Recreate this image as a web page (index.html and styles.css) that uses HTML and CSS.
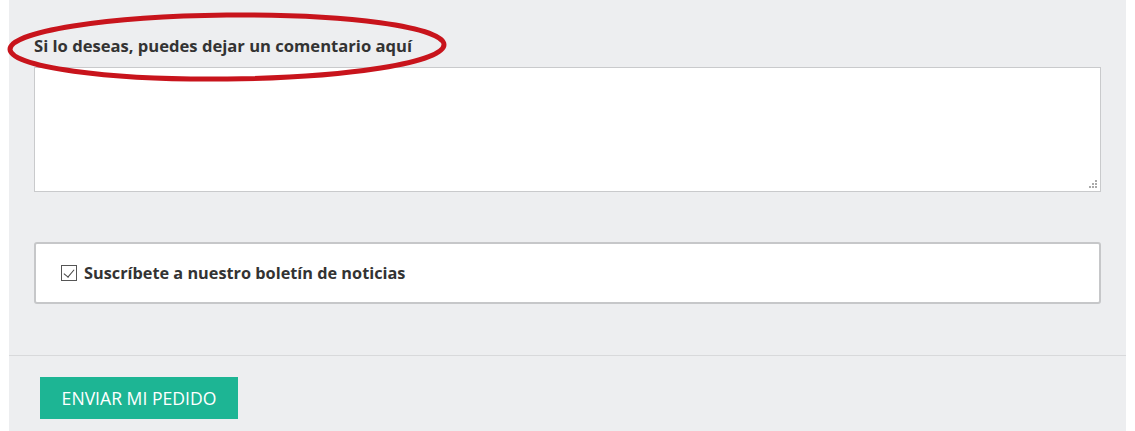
FILE: index.html
```html
<!DOCTYPE html>
<html>
<head>
  <title>Comentario del pedido</title>
  <link rel="stylesheet" href="styles.css">
</head>
<body>

  <div class="panel">
    <div class="fields">
      <div class="comment">
        <label class="comment-label" for="comment">Si lo deseas, puedes dejar un comentario aquí</label>
        <svg class="highlight" width="446" height="74" viewBox="0 0 446 74">
          <ellipse cx="222" cy="35" rx="217" ry="32" transform="rotate(-0.6 222 35)" fill="none" stroke="#c8141c" stroke-width="5"/>
        </svg>
        <div class="box-wrap">
          <textarea id="comment" class="comment-box"></textarea>
          <svg class="grip" width="10" height="10" viewBox="0 0 10 10">
            <rect x="7" y="1" width="2" height="2" fill="#aaa"/>
            <rect x="4" y="4" width="2" height="2" fill="#aaa"/>
            <rect x="7" y="4" width="2" height="2" fill="#aaa"/>
            <rect x="1" y="7" width="2" height="2" fill="#aaa"/>
            <rect x="4" y="7" width="2" height="2" fill="#aaa"/>
            <rect x="7" y="7" width="2" height="2" fill="#aaa"/>
          </svg>
        </div>
      </div>

      <div class="newsletter">
        <label class="check">
          <input type="checkbox" checked>
          <span>Suscríbete a nuestro boletín de noticias</span>
        </label>
      </div>
    </div>

    <div class="actions">
      <button class="send">ENVIAR MI PEDIDO</button>
    </div>
  </div>

</body>
</html>
```

FILE: styles.css
```css
body {
  margin: 0;
  padding: 0 9px;
  background: #fff;
  font-family: "Open Sans", "Liberation Sans", sans-serif;
  color: #333;
}
.panel {
  background: #edeef0;
  height: 431px;
}
.fields {
  padding: 34px 25px 51px 25px;
  border-bottom: 1px solid #d8d9db;
}
.comment {
  position: relative;
}
.comment-label {
  display: block;
  font-size: 16.6px;
  font-weight: bold;
  line-height: 24px;
  margin-bottom: 9px;
}
.highlight {
  position: absolute;
  left: -29px;
  top: -22px;
  z-index: 2;
  pointer-events: none;
}
.box-wrap {
  position: relative;
  margin-bottom: 50px;
}
.comment-box {
  display: block;
  box-sizing: border-box;
  width: 100%;
  height: 125px;
  margin: 0;
  border: 1px solid #c9cacc;
  background: #fff;
  resize: none;
}
.grip {
  position: absolute;
  right: 3px;
  bottom: 3px;
}
.newsletter {
  box-sizing: border-box;
  height: 62px;
  background: #fff;
  border: 2px solid #c6c7c9;
  border-radius: 3px;
  padding: 0 0 0 25px;
  display: flex;
  align-items: center;
}
.check {
  display: flex;
  align-items: center;
  gap: 7px;
  font-size: 16.3px;
  font-weight: bold;
}
.check input {
  margin: 0;
  width: 16px;
  height: 16px;
  appearance: none;
  border: 1px solid #555;
  background: #fff;
  position: relative;
}
.check input:checked::after {
  content: "";
  position: absolute;
  left: 4px;
  top: 1px;
  width: 5px;
  height: 9px;
  border: solid #444;
  border-width: 0 1.5px 1.5px 0;
  transform: rotate(40deg);
}
.actions {
  padding: 21px 31px;
}
.send {
  background: #1db594;
  color: #fff;
  border: none;
  padding: 0;
  width: 198px;
  height: 42px;
  font-family: "Open Sans", "Liberation Sans", sans-serif;
  font-size: 17.6px;
  cursor: pointer;
}
```
